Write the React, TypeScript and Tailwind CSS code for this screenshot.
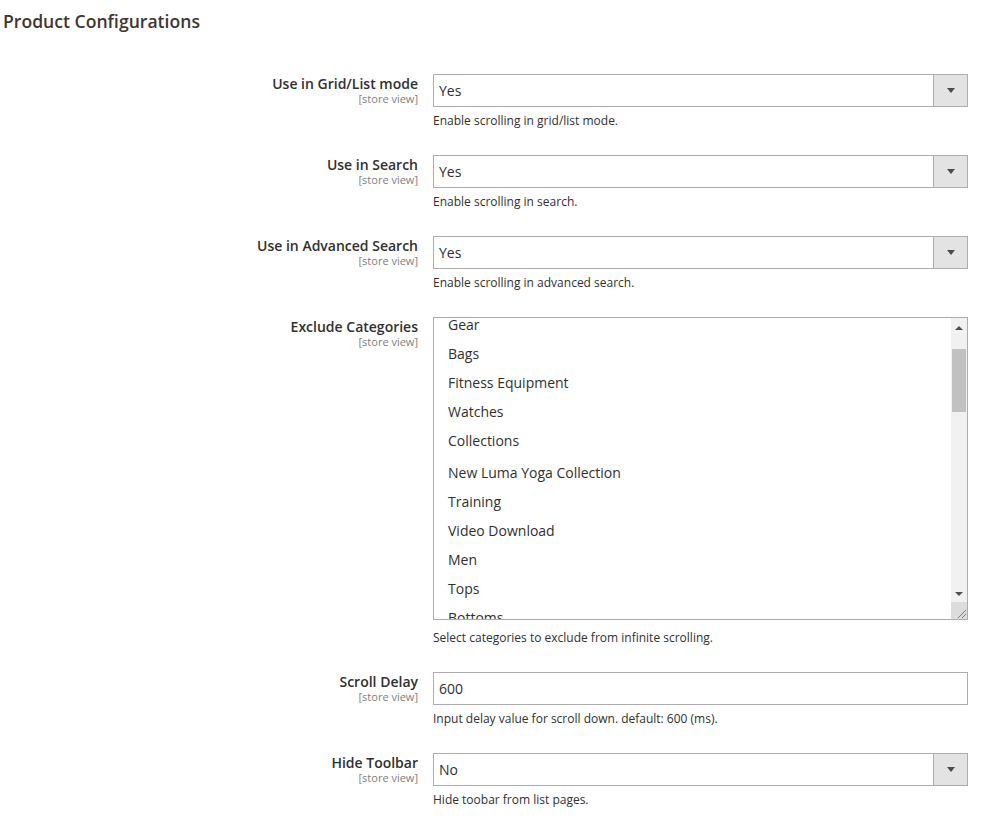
import React from "react";

const font = { fontFamily: "'Open Sans', 'Liberation Sans', sans-serif" };

function Label({ title }: { title: string }) {
  return (
    <div className="w-[418px] shrink-0 text-right pt-[2px]">
      <div className="text-[14px] leading-[16px] font-semibold text-[#303030]">{title}</div>
      <div className="mt-[1px] text-[11px] leading-[12px] text-[#808080]">[store view]</div>
    </div>
  );
}

function Note({ children, className = "mt-[6px]" }: { children: React.ReactNode; className?: string }) {
  return <div className={"text-[12px] leading-[15px] text-[#303030] " + className}>{children}</div>;
}

function Select({ value }: { value: string }) {
  return (
    <div className="flex h-[33px] border border-[#adadad] bg-white">
      <div className="flex-1 pl-[5px] text-[14px] leading-[31px] text-[#303030]">{value}</div>
      <div className="w-[34px] border-l border-[#adadad] bg-[#e3e3e3] flex items-center justify-center">
        <svg width="8" height="5" viewBox="0 0 8 5">
          <path d="M0 0 L8 0 L4 5 Z" fill="#514943" />
        </svg>
      </div>
    </div>
  );
}

function Row({
  title,
  children,
  className = "",
}: {
  title: string;
  children: React.ReactNode;
  className?: string;
}) {
  return (
    <div className={"flex gap-[15px] " + className}>
      <Label title={title} />
      <div className="w-[535px] shrink-0">{children}</div>
    </div>
  );
}

const items = [
  "Gear",
  "Bags",
  "Fitness Equipment",
  "Watches",
  "Collections",
  "New Luma Yoga Collection",
  "Training",
  "Video Download",
  "Men",
  "Tops",
  "Bottoms",
];

function MultiSelect() {
  return (
    <div className="flex h-[303px] border border-[#adadad] bg-white overflow-hidden">
      <div className="flex-1 overflow-hidden">
        <div className="-mt-[8px]">
          {items.map((it, i) => (
            <div
              key={it}
              className={
                "h-[29px] pl-[14px] text-[14px] leading-[29px] text-[#303030] whitespace-nowrap " +
                (i === 5 ? "mt-[3px]" : "")
              }
            >
              {it}
            </div>
          ))}
        </div>
      </div>
      <div className="w-[16px] bg-[#f1f1f1] flex flex-col">
        <div className="h-[16px] flex items-center justify-center mt-[2px]">
          <svg width="8" height="4" viewBox="0 0 8 4">
            <path d="M0 4 L8 4 L4 0 Z" fill="#505050" />
          </svg>
        </div>
        <div className="mx-[1px] mt-[13px] h-[63px] bg-[#c1c1c1]" />
        <div className="flex-1" />
        <div className="h-[16px] flex items-center justify-center">
          <svg width="8" height="4" viewBox="0 0 8 4">
            <path d="M0 0 L8 0 L4 4 Z" fill="#505050" />
          </svg>
        </div>
        <div className="h-[17px] bg-[#dcdcdc] relative">
          <svg className="absolute right-[1px] bottom-[1px]" width="10" height="10" viewBox="0 0 10 10">
            <path d="M2 10 L10 2 M6 10 L10 6" stroke="#808080" strokeWidth="1" />
          </svg>
        </div>
      </div>
    </div>
  );
}

export default function App() {
  return (
    <div className="min-h-[836px] w-[984px] bg-white" style={font}>
      <div className="pt-[10px] pl-[3px] text-[17.6px] leading-[22px] font-semibold text-[#41362f]">
        Product Configurations
      </div>
      <div className="mt-[42px] flex flex-col">
        <Row title="Use in Grid/List mode" className="mb-[27px]">
          <Select value="Yes" />
          <Note>Enable scrolling in grid/list mode.</Note>
        </Row>
        <Row title="Use in Search" className="mb-[27px]">
          <Select value="Yes" />
          <Note>Enable scrolling in search.</Note>
        </Row>
        <Row title="Use in Advanced Search" className="mb-[27px]">
          <Select value="Yes" />
          <Note>Enable scrolling in advanced search.</Note>
        </Row>
        <Row title="Exclude Categories" className="mb-[27px]">
          <MultiSelect />
          <Note className="mt-[10px]">Select categories to exclude from infinite scrolling.</Note>
        </Row>
        <Row title="Scroll Delay" className="mb-[27px]">
          <div className="h-[33px] border border-[#adadad] bg-white pl-[5px] text-[14px] leading-[31px] text-[#303030]">
            600
          </div>
          <Note>Input delay value for scroll down. default: 600 (ms).</Note>
        </Row>
        <Row title="Hide Toolbar">
          <Select value="No" />
          <Note>Hide toobar from list pages.</Note>
        </Row>
      </div>
    </div>
  );
}
